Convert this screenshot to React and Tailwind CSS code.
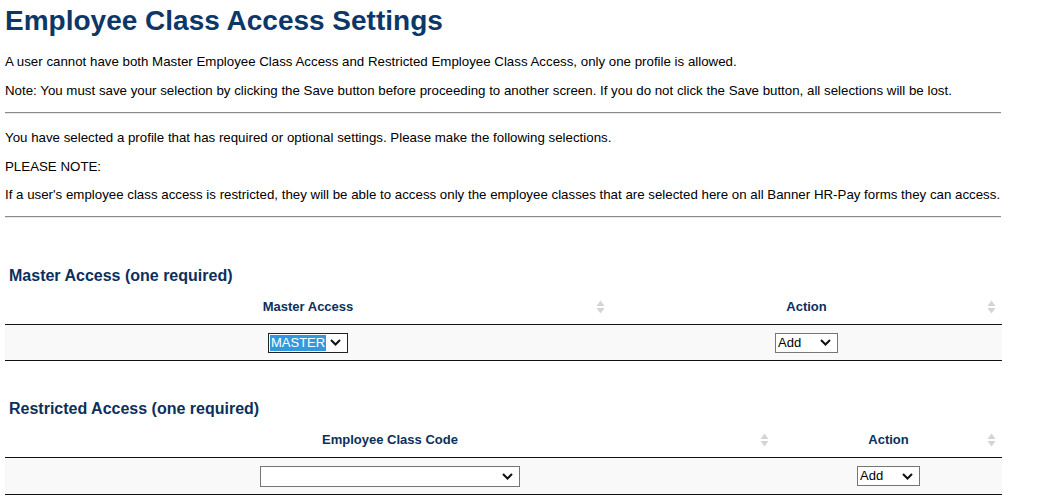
import React from "react";

function SortIcon() {
  return (
    <svg className="absolute right-[6px] top-1/2 -translate-y-1/2" width="9" height="14" viewBox="0 0 9 14">
      <path d="M4.5 0.5 L8.5 6 L0.5 6 Z" fill="#d4d4d4" />
      <path d="M4.5 13.5 L8.5 8 L0.5 8 Z" fill="#d4d4d4" />
    </svg>
  );
}

function Chevron() {
  return (
    <svg width="11" height="7" viewBox="0 0 11 7" className="shrink-0">
      <path d="M1 1 L5.5 5.5 L10 1" fill="none" stroke="#111" strokeWidth="2" />
    </svg>
  );
}

function Select({ width, children, dark }) {
  return (
    <div
      className={`h-[20px] bg-white border flex items-center justify-between pl-[1px] pr-[6px] text-[13px] leading-[16px] text-black ${dark ? "border-[#222]" : "border-[#767676]"}`}
      style={{ width }}
    >
      <div className="flex items-center">{children}</div>
      <Chevron />
    </div>
  );
}

function HeaderCell({ children }) {
  return (
    <div className="relative h-[35px] flex items-center justify-center text-[13px] font-bold text-[#0c2f5c]">
      {children}
      <SortIcon />
    </div>
  );
}

export default function App() {
  return (
    <div className="w-[1049px] h-[501px] overflow-hidden bg-white text-black font-['Liberation_Sans',Arial,sans-serif] text-[13.3px]">
      <div className="ml-[5px] w-[997px]">
        <h1 className="pt-[5px] text-[28px] leading-[32px] font-bold text-[#0c3768]">Employee Class Access Settings</h1>
        <p className="mt-[18px] leading-[14px] whitespace-nowrap">
          A user cannot have both Master Employee Class Access and Restricted Employee Class Access, only one profile is allowed.
        </p>
        <p className="mt-[15px] leading-[14px] whitespace-nowrap">
          Note: You must save your selection by clicking the Save button before proceeding to another screen. If you do not click the Save button, all selections will be lost.
        </p>
        <div className="mt-[14px] w-[996px] border-t border-[#8a8a8a] border-b border-b-[#e8e8e8]" />
        <p className="mt-[17px] leading-[14px] whitespace-nowrap">
          You have selected a profile that has required or optional settings. Please make the following selections.
        </p>
        <p className="mt-[15px] leading-[14px] whitespace-nowrap">PLEASE NOTE:</p>
        <p className="mt-[14px] leading-[14px] whitespace-nowrap">
          If a user's employee class access is restricted, they will be able to access only the employee classes that are selected here on all Banner HR-Pay forms they can access.
        </p>
        <div className="mt-[14px] w-[996px] border-t border-[#8a8a8a] border-b border-b-[#e8e8e8]" />

        <h2 className="mt-[49px] pl-[4px] text-[16px] leading-[18px] font-bold text-[#0c2f5c]">Master Access (one required)</h2>
        <div className="mt-[4px] grid grid-cols-[606px_1fr]">
          <HeaderCell>Master Access</HeaderCell>
          <HeaderCell>Action</HeaderCell>
        </div>
        <div className="grid grid-cols-[606px_1fr] h-[37px] bg-[#f9f9f9] border-t border-[#111] border-b border-b-[#111]">
          <div className="flex items-center justify-center">
            <Select width={80} dark>
              <span className="bg-[#3399dd] text-white px-[1px] leading-[16px]">MASTER</span>
            </Select>
          </div>
          <div className="flex items-center justify-center">
            <Select width={63}>
              <span className="px-[1px]">Add</span>
            </Select>
          </div>
        </div>

        <h2 className="mt-[39px] pl-[4px] text-[16px] leading-[18px] font-bold text-[#0c2f5c]">Restricted Access (one required)</h2>
        <div className="mt-[4px] grid grid-cols-[770px_1fr]">
          <HeaderCell>Employee Class Code</HeaderCell>
          <HeaderCell>Action</HeaderCell>
        </div>
        <div className="grid grid-cols-[770px_1fr] h-[38px] bg-[#f9f9f9] border-t border-[#111] border-b border-b-[#111]">
          <div className="flex items-center justify-center">
            <div className="h-[21px] w-[260px] bg-white border border-[#767676] flex items-center justify-end pr-[6px]">
              <Chevron />
            </div>
          </div>
          <div className="flex items-center justify-center">
            <Select width={63}>
              <span className="px-[1px]">Add</span>
            </Select>
          </div>
        </div>
      </div>
    </div>
  );
}
